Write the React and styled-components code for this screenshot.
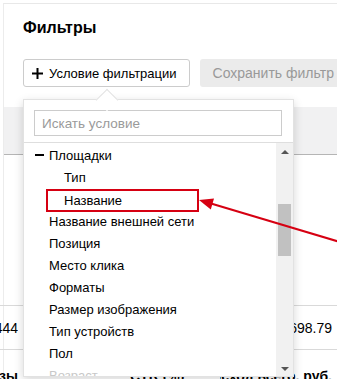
import React from "react";
import styled, { createGlobalStyle } from "styled-components";

const GlobalStyle = createGlobalStyle`
  html, body {
    margin: 0;
    padding: 0;
    background: #fff;
    overflow: hidden;
  }
  body {
    font-family: "Liberation Sans", Arial, sans-serif;
    color: #000;
  }
  * { box-sizing: border-box; }
`;

const Page = styled.div`
  position: relative;
  width: 337px;
  height: 379px;
  overflow: hidden;
`;

const Card = styled.div`
  margin: 3px 0 0 3px;
  width: 360px;
  border-top: 1px solid #e8e8e8;
  border-left: 1px solid #ececec;
`;

const Title = styled.h2`
  margin: 0;
  padding: 14px 0 0 19px;
  font-size: 16px;
  line-height: 20px;
  font-weight: bold;
`;

const Toolbar = styled.div`
  display: flex;
  gap: 10px;
  margin-top: 21px;
  padding-left: 19px;
`;

const AddButton = styled.button`
  display: flex;
  align-items: center;
  gap: 6px;
  height: 28px;
  padding: 0 12px 0 8px;
  background: #fff;
  border: 1px solid #ccc;
  border-radius: 3px;
  font-family: inherit;
  font-size: 13px;
  color: #000;
`;

const SaveButton = styled.button`
  height: 28px;
  padding: 0 12px 0 13px;
  background: #ebebeb;
  border: none;
  border-radius: 3px;
  font-family: inherit;
  font-size: 14px;
  color: #999;
`;

const TableHead = styled.div`
  display: flex;
  height: 48px;
  margin-top: 20px;
  background: #f1f1f2;
  border-bottom: 1px solid #b5b5b5;
`;

const HeadCell = styled.div`
  width: ${(p) => p.width}px;
  margin-top: 10px;
  border-left: ${(p) => (p.accent ? "1px solid #f3c64a" : "none")};
`;

const TableBody = styled.div`
  margin-left: -4px;
  padding-top: 150px;
`;

const Row = styled.div`
  display: flex;
  align-items: ${(p) => (p.bold ? "flex-start" : "center")};
  height: ${(p) => (p.bold ? 30 : 45)}px;
  padding-top: ${(p) => (p.bold ? 18 : 0)}px;
  border-top: ${(p) => (p.bold ? "none" : "1px solid #d9d9d9")};
  border-bottom: ${(p) => (p.bold ? "none" : "1px solid #d9d9d9")};
  font-size: 14px;
  line-height: 16px;
  font-weight: ${(p) => (p.bold ? "bold" : "normal")};
`;

const Cell = styled.div`
  display: flex;
  justify-content: ${(p) => (p.right ? "flex-end" : "flex-start")};
  width: ${(p) => p.width}px;
  flex: none;
  overflow: hidden;
  white-space: nowrap;
`;

const Popup = styled.div`
  position: absolute;
  left: 23px;
  top: 99px;
  width: 271px;
  height: 278px;
  display: flex;
  flex-direction: column;
  background: #fff;
  border: 1px solid #e2e2e2;
  box-shadow: 0 3px 9px rgba(0, 0, 0, 0.16);

  &::before {
    content: "";
    position: absolute;
    left: 75px;
    top: -8.5px;
    width: 15px;
    height: 15px;
    background: #fff;
    border-top: 1px solid #e2e2e2;
    border-left: 1px solid #e2e2e2;
    transform: rotate(45deg);
  }
`;

const SearchBox = styled.div`
  padding: 10px 11px 6px 10px;
  border-bottom: 1px solid #dedede;
`;

const SearchInput = styled.input`
  display: block;
  width: 100%;
  height: 26px;
  padding: 0 7px;
  border: 1px solid #ccc;
  font-family: inherit;
  font-size: 13.5px;
  outline: none;
  &::placeholder {
    color: #9a9a9a;
  }
`;

const ListBody = styled.div`
  display: flex;
  flex: 1;
  min-height: 0;
`;

const List = styled.ul`
  flex: 1;
  margin: 0;
  padding: 1px 0 0;
  list-style: none;
  overflow: hidden;
`;

const Item = styled.li`
  display: flex;
  align-items: center;
  height: 22px;
  padding-left: ${(p) => p.indent}px;
  font-size: 13px;
  white-space: nowrap;
  color: ${(p) => (p.faded ? "#c8c8c8" : "#000")};
`;

const Minus = styled.span`
  width: 9px;
  height: 2px;
  margin-right: 5px;
  background: #000;
`;

const Marked = styled.span`
  display: flex;
  align-items: center;
  width: 153px;
  height: 23px;
  margin-top: 2px;
  padding-left: 16px;
  border: 2px solid #d60012;
`;

const Scrollbar = styled.div`
  display: flex;
  flex-direction: column;
  align-items: center;
  width: 17px;
  background: #f1f1f1;
`;

const ScrollArrow = styled.div`
  display: flex;
  align-items: center;
  justify-content: center;
  height: ${(p) => (p.down ? 14 : 17)}px;
  flex: none;
  &::after {
    content: "";
    border-left: 4px solid transparent;
    border-right: 4px solid transparent;
    ${(p) => (p.down ? "border-top" : "border-bottom")}: 4px solid #555;
  }
`;

const Track = styled.div`
  flex: 1;
`;

const Thumb = styled.div`
  width: 13px;
  height: 52px;
  margin-top: 44px;
  background: #c1c1c1;
`;

const Pointer = styled.svg`
  position: absolute;
  left: 0;
  top: 0;
  pointer-events: none;
`;

const PlusIcon = () => (
  <svg width="11" height="11" viewBox="0 0 11 11">
    <path d="M5.5 0v11M0 5.5h11" stroke="#000" strokeWidth="2" />
  </svg>
);

const items = [
  { label: "Площадки", indent: 11, open: true },
  { label: "Тип", indent: 40 },
  { label: "Название", indent: 22, marked: true },
  { label: "Название внешней сети", indent: 25 },
  { label: "Позиция", indent: 25 },
  { label: "Место клика", indent: 25 },
  { label: "Форматы", indent: 25 },
  { label: "Размер изображения", indent: 25 },
  { label: "Тип устройств", indent: 25 },
  { label: "Пол", indent: 25 },
  { label: "Возраст", indent: 25, faded: true },
];

export default function App() {
  return (
    <Page>
      <GlobalStyle />
      <Card>
        <Title>Фильтры</Title>
        <Toolbar>
          <AddButton>
            <PlusIcon />
            Условие фильтрации
          </AddButton>
          <SaveButton disabled>Сохранить фильтр</SaveButton>
        </Toolbar>
        <TableHead>
          <HeadCell width={19} />
          <HeadCell width={300} accent />
        </TableHead>
        <TableBody>
          <Row>
            <Cell width={18} right>1 444</Cell>
            <Cell width={314} right>16 698.79</Cell>
          </Row>
          <Row bold>
            <Cell width={18} right>Фразы</Cell>
            <Cell width={112} />
            <Cell width={90}>CTR (%)</Cell>
            <Cell width={112} right>Расход всего, руб.</Cell>
          </Row>
        </TableBody>
      </Card>

      <Popup>
        <SearchBox>
          <SearchInput placeholder="Искать условие" />
        </SearchBox>
        <ListBody>
          <List>
            {items.map((it) => (
              <Item key={it.label} indent={it.indent} faded={it.faded}>
                {it.open && <Minus />}
                {it.marked ? <Marked>{it.label}</Marked> : it.label}
              </Item>
            ))}
          </List>
          <Scrollbar>
            <ScrollArrow />
            <Track>
              <Thumb />
            </Track>
            <ScrollArrow down />
          </Scrollbar>
        </ListBody>
      </Popup>

      <Pointer width="337" height="379" viewBox="0 0 337 379">
        <line x1="340" y1="242" x2="211" y2="203.5" stroke="#d60012" strokeWidth="2" />
        <polygon points="199,200 214,198.6 210.8,209.6" fill="#d60012" />
      </Pointer>
    </Page>
  );
}
